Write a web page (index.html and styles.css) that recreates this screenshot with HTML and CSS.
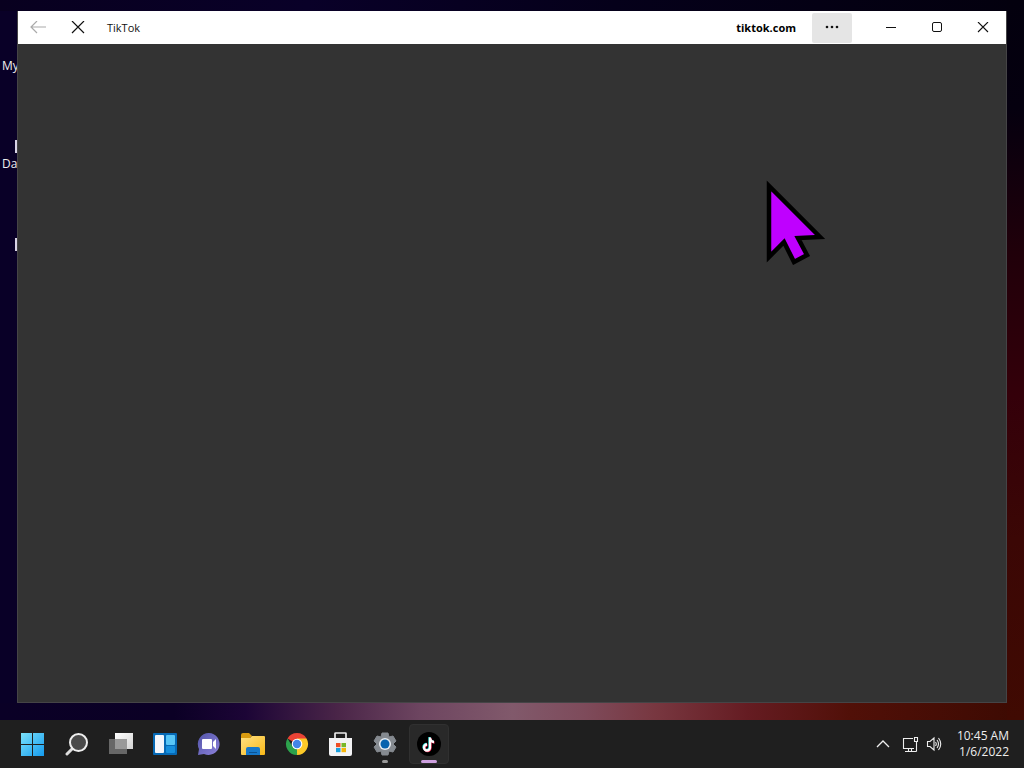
FILE: index.html
```html
<!DOCTYPE html>
<html lang="en">
<head>
<meta charset="utf-8">
<title>TikTok</title>
<link rel="stylesheet" href="styles.css">
</head>
<body>
<main class="desktop">
  <div class="shortcuts">
    <span class="shortcut shortcut-first">My</span>
    <span class="shortcut shortcut-second"><i class="file-icon"></i>Da</span>
    <span class="shortcut shortcut-third"><i class="file-icon"></i></span>
  </div>
  <section class="window">
    <header class="titlebar">
      <button class="nav-button" aria-label="Back" disabled>
        <svg width="16" height="14" viewBox="0 0 16 14"><path d="M16 6H1M7 0 1 6l6 6" fill="none" stroke="#aaa" stroke-width="1.2"/></svg>
      </button>
      <button class="nav-button" aria-label="Stop loading">
        <svg width="14" height="14" viewBox="0 0 14 14"><path d="m1 0 12 12M13 0 1 12" fill="none" stroke="#111" stroke-width="1.2"/></svg>
      </button>
      <h1 class="title">TikTok</h1>
      <span class="domain">tiktok.com</span>
      <button class="more-button" aria-label="More">
        <svg width="14" height="6" viewBox="0 0 14 6"><g fill="#111"><circle cx="2" cy="2" r="1.3"/><circle cx="7" cy="2" r="1.3"/><circle cx="12" cy="2" r="1.3"/></g></svg>
      </button>
      <div class="caption-buttons">
        <button class="caption-button" aria-label="Minimize"><svg width="12" height="12" viewBox="0 0 12 12"><path d="M1 5.5h10" stroke="#111"/></svg></button>
        <button class="caption-button" aria-label="Maximize"><svg width="12" height="12" viewBox="0 0 12 12"><rect x="1.5" y=".5" width="9" height="9" rx="1.5" fill="none" stroke="#111"/></svg></button>
        <button class="caption-button" aria-label="Close"><svg width="12" height="12" viewBox="0 0 12 12"><path d="m1 0 10 10M11 0 1 10" stroke="#111" stroke-width="1.1"/></svg></button>
      </div>
    </header>
    <div class="page"></div>
  </section>
  <svg class="pointer" width="62" height="88" viewBox="0 0 62 88"><path d="M4 9v71l15-15 10 20 13-7-9-17 22-1z" fill="#bf00ff" stroke="#000" stroke-width="4.500"/></svg>
</main>
<footer class="taskbar">
  <nav class="apps">
    <button class="app" aria-label="Start">
      <svg width="24" height="24" viewBox="0 0 24 24"><defs><linearGradient id="start" x1="0" y1="0" x2="24" y2="24" gradientUnits="userSpaceOnUse"><stop stop-color="#7de3fb"/><stop offset="1" stop-color="#1299ee"/></linearGradient></defs><path d="M0 1h11v11H0zM12 1h11v11H12zM0 13h11v11H0zM12 13h11v11H12z" fill="url(#start)"/></svg>
    </button>
    <button class="app" aria-label="Search">
      <svg width="24" height="24" viewBox="0 0 24 24"><path d="m8 16-6 6" stroke="#ddd" stroke-width="3" stroke-linecap="round"/><circle cx="13.500" cy="10.500" r="8.500" fill="#4a4a4a" stroke="#eee" stroke-width="2"/></svg>
    </button>
    <button class="app" aria-label="Task view">
      <svg width="24" height="24" viewBox="0 0 24 24"><defs><linearGradient id="view" x2="1" y2="1"><stop stop-color="#fff"/><stop offset="1" stop-color="#d2d2d2"/></linearGradient></defs><path d="M6 1h18v16H6z" fill="url(#view)"/><path d="M0 7h18v15H0z" fill="#676767"/><path d="M6 7h12v10H6z" fill="#999"/></svg>
    </button>
    <button class="app" aria-label="Widgets">
      <svg width="24" height="24" viewBox="0 0 24 24"><rect y="1" width="24" height="22" rx="1" fill="#0669b5"/><rect x="2" y="3" width="9" height="18" rx="1" fill="#f4f6fc"/><rect x="13" y="3" width="9" height="10" rx="1" fill="#58c6f7"/><rect x="13" y="14" width="9" height="7" rx="1" fill="#168fdd"/></svg>
    </button>
    <button class="app" aria-label="Chat">
      <svg width="24" height="24" viewBox="0 0 24 24"><defs><linearGradient id="chat" x2="1" y2="1"><stop stop-color="#5254a8"/><stop offset="1" stop-color="#8d82db"/></linearGradient></defs><path d="M12 1a11 11 0 1 1-5 21l-6 1 1-6A11 11 0 0 1 12 1z" fill="url(#chat)"/><rect x="5" y="7" width="10" height="10" rx="1" fill="#fff"/><path d="m16 10 3-3v10l-3-3z" fill="#fff"/></svg>
    </button>
    <button class="app" aria-label="File Explorer">
      <svg width="26" height="24" viewBox="0 0 26 24"><defs><linearGradient id="folder" x2="1" y2="1"><stop stop-color="#ffe184"/><stop offset="1" stop-color="#f8b817"/></linearGradient></defs><path d="M1 6V3q0-2 2-2h6l3 3-3 3z" fill="#d99b10"/><path d="M1 6h9l2-2h12q1 0 1 1v17q0 1-1 1H2q-1 0-1-1z" fill="url(#folder)"/><path d="M6 23v-6q0-2 2-2h10q2 0 2 2v6z" fill="#1678ca"/><path d="M9 20h8v1H9z" fill="#0b5293"/></svg>
    </button>
    <button class="app" aria-label="Chrome">
      <svg width="24" height="24" viewBox="0 0 24 24"><path d="M12 12 2.470 6.500a11 11 0 0 1 19.060 0z" fill="#e94335"/><path d="M21.530 6.500H12V12l-.5 11A11 11 0 0 0 21.530 6.500" fill="#fcc928"/><path d="M2.470 6.500 7.500 14.500l6-.5L12 23A11 11 0 0 1 2.470 6.500" fill="#2ca24c"/><path d="M12 23 16.500 14.500 12 12z" fill="#fcc928"/><circle cx="12" cy="12" r="5.300" fill="#fff"/><circle cx="12" cy="12" r="4.200" fill="#4285e8"/></svg>
    </button>
    <button class="app" aria-label="Microsoft Store">
      <svg width="24" height="26" viewBox="0 0 24 26"><path d="M6 8V2.500q0-.5.500-.5h10q.5 0 .5.500V8" fill="none" stroke="#eee" stroke-width="1.700"/><path d="M0 7h23v16q0 2-2 2H2q-2 0-2-2z" fill="#f3f3f5"/><path d="M7 12h4.500v4.200H7z" fill="#ef4e24"/><path d="M12.500 12H17v4.200h-4.500z" fill="#79b829"/><path d="M7 17h4.500v4.200H7z" fill="#18a0df"/><path d="M12.500 17H17v4.200h-4.500z" fill="#f7b60b"/></svg>
    </button>
    <button class="app running" aria-label="Settings">
      <svg width="24" height="24" viewBox="0 0 24 24"><path d="M9 1h6l1 4 4-1 3 5-3 3 3 3-3 5-4-1-1 4H9l-1-4-4 1-3-5 3-3-3-3 3-5 4 1z" fill="#858a90" stroke="#858a90" stroke-linejoin="round"/><circle cx="12" cy="12" r="6" fill="#e8edf2"/><circle cx="12" cy="12" r="4.500" fill="#0863ae"/></svg>
    </button>
    <button class="app active" aria-label="TikTok">
      <svg width="24" height="24" viewBox="0 0 24 24"><circle cx="12" cy="12" r="12" fill="#000"/><g fill="none" stroke-width="2.300"><path d="M12.500 5v10a3 3 0 1 1-3-3M12.500 6c.5 2 2 3.500 4 3.500" stroke="#25e5df"/><path d="M13.500 6v10a3 3 0 1 1-3-3M13.500 7c.5 2 2 3.500 4 3.500" stroke="#f52d58"/><path d="M13 5.500v10a3 3 0 1 1-3-3M13 6.500c.5 2 2 3.500 4 3.500" stroke="#fff"/></g></svg>
    </button>
  </nav>
  <div class="tray">
    <button class="tray-button" aria-label="Show hidden icons"><svg width="14" height="8" viewBox="0 0 14 8"><path d="m1 7 6-6 6 6" fill="none" stroke="#eee" stroke-width="1.300"/></svg></button>
    <button class="status" aria-label="Network and volume">
      <svg width="17" height="17" viewBox="0 0 17 17"><path d="M11 2.500H1.500v10H12M6.500 12.500v3M9.500 12.500v3M3 15.500h11.500M12.500 1.500h3v4h-3zM14.500 6v9.500" fill="none" stroke="#eee" stroke-width="1.100"/></svg>
      <svg width="16" height="16" viewBox="0 0 16 16"><path d="M1.500 5.500h2.500l4-3.500v12l-4-3.500H1.500zM9.500 6q1.500 2 0 4M11 4q3 4 0 8M12.500 2q4.500 6 0 12" fill="none" stroke="#eee" stroke-width="1.100"/></svg>
    </button>
    <div class="clock"><time>10:45 AM</time><time>1/6/2022</time></div>
  </div>
</footer>
</body>
</html>
```
FILE: styles.css
```css
* { box-sizing: border-box; }

body {
  display: flex;
  flex-direction: column;
  min-height: 100vh;
  margin: 0;
  background: #1f1f1f;
  font-family: "Open Sans", "Noto Sans", sans-serif;
  font-size: 12px;
  line-height: 16px;
}

button {
  display: flex;
  align-items: center;
  justify-content: center;
  padding: 0;
  border: 0;
  background: none;
  font: inherit;
}

.desktop {
  position: relative;
  display: flex;
  flex: 1;
  padding: 11px 17px 17px;
  background:
    linear-gradient(#03000e, #05000f 15%, #20000a 35%, #34000a 55%, #3b0705 75%, #400a02) right / 17px 100% no-repeat,
    linear-gradient(90deg, #0a0026, #0b0025 17%, #1c0536 24%, #4a2548 33%, #6d4560 41%, #81596b 50%, #7e4b5b 57%, #783740 64%, #651c22 73%, #511008 83%, #3c0a02) bottom / 100% 17px no-repeat,
    linear-gradient(90deg, #08001f, #090028 30%, #05001a 60%, #03000e) top / 100% 11px no-repeat,
    #090027;
}

.shortcut {
  position: absolute;
  left: 2px;
  width: 16px;
  overflow: hidden;
  color: #eee;
}

.shortcut-first { top: 58px; }
.shortcut-second { top: 140px; }
.shortcut-third { top: 238px; }

.file-icon {
  display: block;
  width: 3px;
  height: 13px;
  margin: 0 0 3px 13px;
  background: #d9d4e6;
}

.window {
  position: relative;
  display: flex;
  flex: 1;
  flex-direction: column;
  border: solid #454446;
  border-width: 0 1px 1px;
}

.titlebar {
  display: flex;
  align-items: center;
  height: 33px;
  background: #fff;
  color: #111;
  font-size: 11px;
}

.nav-button {
  width: 40px;
  height: 32px;
}

.title {
  flex: 1;
  margin: 0;
  padding-left: 9px;
  font-size: 11px;
  font-weight: 400;
}

.domain {
  color: #000;
  font-weight: 700;
}

.more-button {
  width: 40px;
  height: 30px;
  margin: 0 16px;
  background: #e5e5e5;
  border-radius: 2px;
}

.caption-buttons { display: flex; }

.caption-button {
  width: 46px;
  height: 32px;
}

.page {
  flex: 1;
  background: #333;
}

.pointer {
  position: absolute;
  top: 177px;
  left: 765px;
}

.taskbar {
  display: flex;
  align-items: center;
  justify-content: space-between;
  height: 48px;
  padding: 0 15px 0 13px;
}

.apps {
  display: flex;
  gap: 4px;
}

.app {
  position: relative;
  width: 40px;
  height: 40px;
  border-radius: 4px;
}

.app.active {
  background: #292929;
  border: 1px solid #303030;
}

.running::after,
.active::after {
  position: absolute;
  bottom: 1px;
  width: 6px;
  height: 3px;
  border-radius: 2px;
  background: #999;
  content: "";
}

.active::after {
  bottom: 0;
  width: 16px;
  background: #cda0df;
}

.tray {
  display: flex;
  align-items: center;
  color: #eee;
}

.tray-button {
  width: 26px;
  height: 40px;
}

.status {
  gap: 7px;
  height: 40px;
  margin: 0 15px 0 6px;
}

.clock {
  display: flex;
  flex-direction: column;
  align-items: flex-end;
}
```
